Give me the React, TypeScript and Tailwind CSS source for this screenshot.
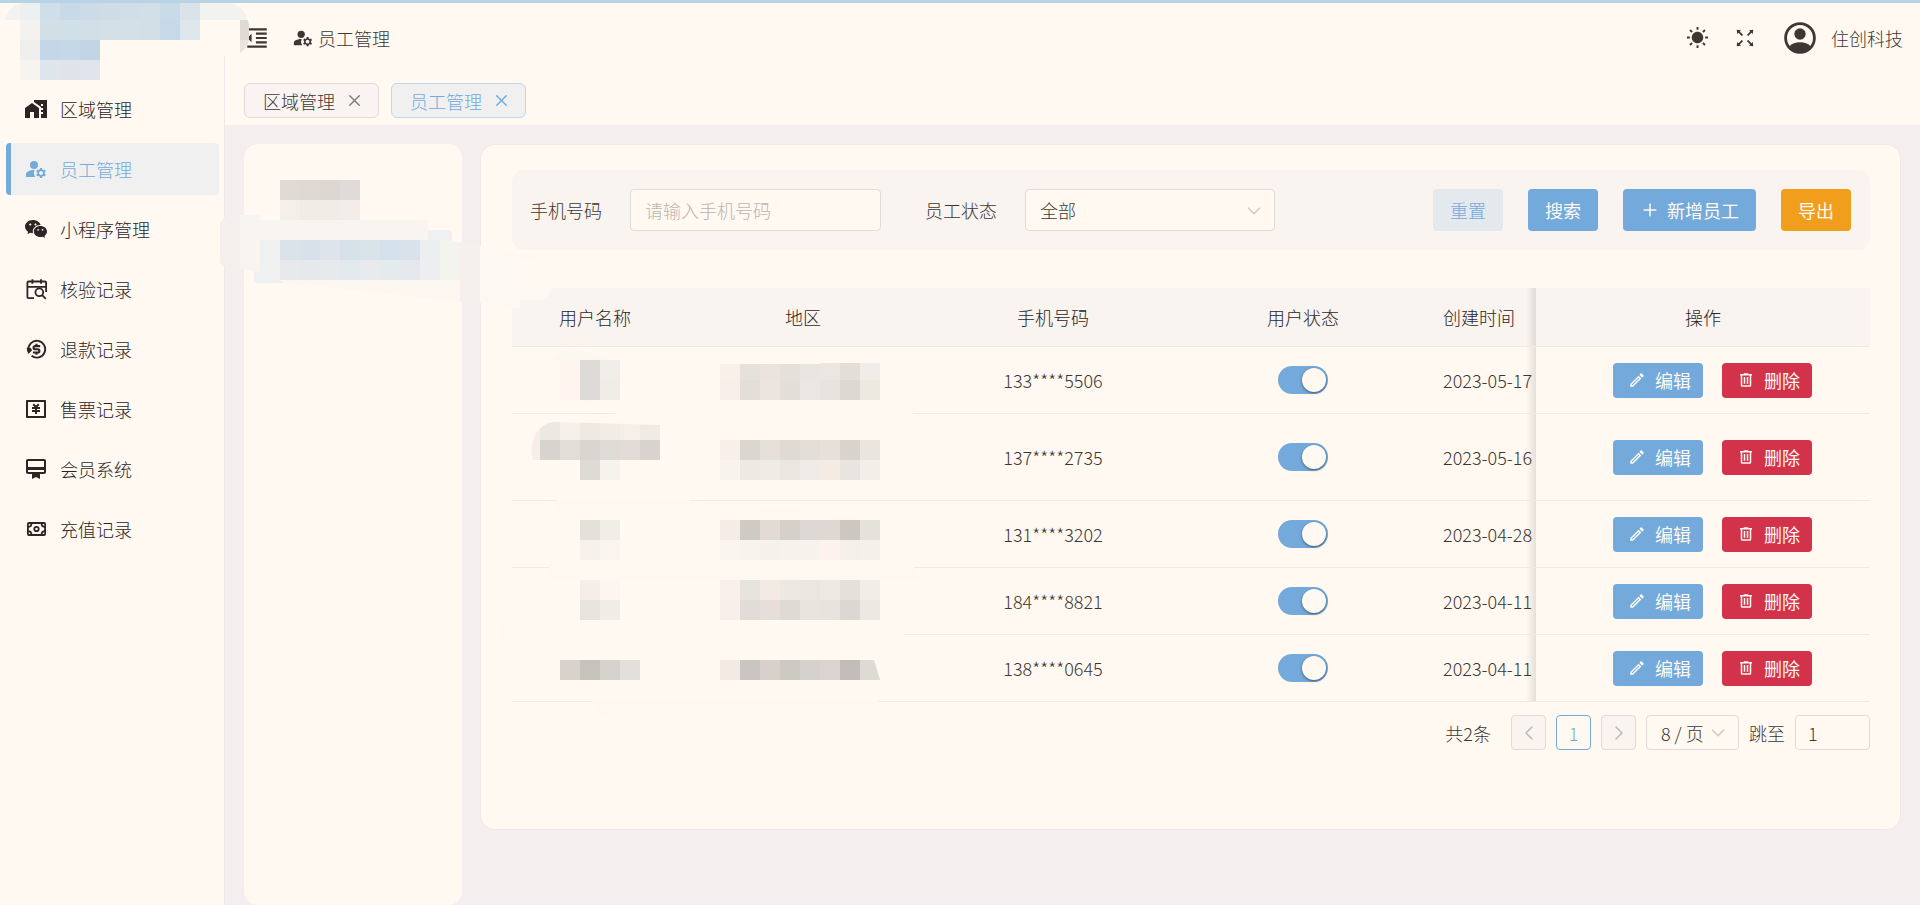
import React from 'react';
import { AiOutlineFullscreen } from 'react-icons/ai';
import { MdCardMembership, MdFormatIndentDecrease, MdHomeWork, MdManageAccounts, MdOutlineEdit } from 'react-icons/md';
import { RiMoneyCnyBoxLine, RiSunFill, RiWechatFill } from 'react-icons/ri';
import { ChevronDown, ChevronLeft, ChevronRight, Plus, X } from 'lucide-react';

const CalendarSearchIcon = () => (
    <svg viewBox="0 0 24 24" className="size-6" fill="none" stroke="currentColor" strokeWidth="1.8">
        <path d="M10 21.2H4.6a1.2 1.2 0 0 1-1.2-1.2V5.7a1.2 1.2 0 0 1 1.2-1.2h16.3a1.2 1.2 0 0 1 1.2 1.2V15" />
        <path d="M3.4 9.8h18.7M8.4 2.3v4.4M17 2.3v4.4" />
        <circle cx="15.3" cy="15.3" r="3.9" />
        <path d="M18.2 18.2l3.6 3.6" />
    </svg>
)

const RefundIcon = () => (
    <svg viewBox="0 0 24 24" className="size-6" fill="none" stroke="currentColor" strokeWidth="1.9">
        <path d="M4.400 13a8.400 8.400 0 1 1 3.200 5.800" />
        <path d="M2.700 10.800h3.800l1.600 2.500-3.600 3.600q-1.800-2-1.800-6.100z" fill="currentColor" stroke="none" />
        <path d="M16.200 9.100h-5a1.600 1.600 0 0 0 0 3.200h2.600a1.600 1.600 0 0 1 0 3.200H8.900M12.500 6.800v2.300M12.500 15.300v2.400" strokeWidth="2.1" />
    </svg>
)

const CashIcon = () => (
    <svg viewBox="0 0 24 24" className="size-6" fill="none" stroke="currentColor" strokeWidth="1.8">
        <rect x="3.900" y="6" width="17.200" height="12" rx="1" />
        <circle cx="12.500" cy="12" r="2.200" />
        <path d="M4 9.800c2 0 3.400-1.400 3.400-3.400M21 9.800c-2 0-3.400-1.400-3.400-3.400M4 14.200c2 0 3.400 1.400 3.400 3.400M21 14.200c-2 0-3.400 1.400-3.400 3.400" />
    </svg>
)

const TrashIcon = () => (
    <svg viewBox="0 0 24 24" className="size-[18px]" fill="currentColor">
        <path d="M9 3v1H4v2h1v13a2 2 0 0 0 2 2h10a2 2 0 0 0 2-2V6h1V4h-5V3H9M7 6h10v13H7V6m2 2v9h2V8H9m4 0v9h2V8h-2z" />
    </svg>
)

const AvatarIcon = () => (
    <svg viewBox="0 0 32 32" className="size-8">
        <circle cx="16" cy="16" r="14.4" fill="none" stroke="currentColor" strokeWidth="2.8" />
        <circle cx="16" cy="12" r="5.7" fill="currentColor" />
        <path d="M5.5 24.5c2-3 6-4.3 10.5-4.3s8.5 1.3 10.5 4.3c-2.5 3.6-6 5.9-10.5 5.9s-8-2.3-10.5-5.9z" fill="currentColor" />
    </svg>
)

const menu = [
    { label: '区域管理', icon: <MdHomeWork className="size-6" /> },
    { label: '员工管理', icon: <MdManageAccounts className="size-6" />, active: true },
    { label: '小程序管理', icon: <RiWechatFill className="size-6" /> },
    { label: '核验记录', icon: <CalendarSearchIcon /> },
    { label: '退款记录', icon: <RefundIcon /> },
    { label: '售票记录', icon: <RiMoneyCnyBoxLine className="size-6" /> },
    { label: '会员系统', icon: <MdCardMembership className="size-6" /> },
    { label: '充值记录', icon: <CashIcon /> },
]

// [x, y, colours of one line of 20px tiles]
type Tiles = [number, number, string]

const rows: { phone: string, date: string, height: number, name: Tiles[], area: Tiles[], nameClip?: string, areaClip?: string }[] = [
    {
        phone: '133****5506',
        date: '2023-05-17',
        height: 66,
        name: [[35, 13, 'fff5ef dedad7 f1ede9'], [35, 33, 'fff4ef dedad7 f0ece6']],
        area: [[0, 13, 'f9f0ea e6e1db ede3dd e5e1da e9e5e0 ebe7e0 e3dfd8 f0ece7'], [0, 33, 'f8efea e3ded8 ece4de e3dfd8 ebe6e2 e8e4dd ddd8d2 ede9e1']],
        areaClip: 'M0 17h100v-1h60v40H0z',
    },
    {
        phone: '137****2735',
        date: '2023-05-16',
        height: 86,
        name: [[-5, 6, 'f7eee8 ece8e2 f5f0ea eee9e3 f0ece6 f4efe8 efebe5'], [-5, 26, 'f7eee8 d7d3ce e1ddd7 dad6cf dfdbd7 e3dbd7 d8d3cf'], [55, 46, 'dedad4 f6f2ec']],
        nameClip: 'M8 46C3 28 12 8 32 8l103 3v35H95v20H55V46z',
        area: [[0, 26, 'f8efea dad7d1 e7dfda dfdbd4 e2ddd7 e5e0da d8d3cd eae6df'], [0, 46, 'f8f3ec eee9e3 efebe5 ebe6e0 f0ebe7 f4ebe4 e8e4e0 f3eee8']],
    },
    {
        phone: '131****3202',
        date: '2023-04-28',
        height: 66,
        name: [[55, 19, 'e4e0da f1ede7'], [55, 39, 'f6f2eb faf6ef']],
        area: [[0, 19, 'f5ece7 cecbc5 e3dad4 d5d0c9 ddd8d4 dcd8d2 cdc7c1 e5e1db'], [0, 39, 'faf6ef f8f3ec f6f1eb f6f2ec f6f2ec fdf3ed f4efe9 f5f0ea']],
    },
    {
        phone: '184****8821',
        date: '2023-04-11',
        height: 66,
        name: [[55, 12, 'f6ede8 fbf6f0'], [55, 32, 'e8e4de f0ece6']],
        area: [[0, 12, 'faf0eb e6e4dd f3eae4 ece8e2 eae6e0 eeeae3 e4e0da f1ede7'], [0, 32, 'f8efea e1dcd8 e7deda dedad4 e8e4de e8e3dd dbd7d3 ece8e2']],
    },
    {
        phone: '138****0645',
        date: '2023-04-11',
        height: 66,
        name: [[35, 25, 'd9d1cc c6c2bc d6d3cc e3e0dc']],
        area: [[0, 25, 'f3eae4 c9c6c1 d9d0cb cdc9c3 d5d1cd d9d4ce c2bdb9 dedad4']],
        areaClip: 'M0 25h154l6 20H0z',
    },
]

const TileRows = ({ tiles }: { tiles: Tiles[] }) => (
    <>
        {tiles.map(([x, y, colors]) =>
            colors.split(' ').map((color, i) => (
                <rect key={`${x}-${y}-${i}`} x={x + i * 20} y={y} width="20" height="20" fill={`#${color}`} />
            ))
        )}
    </>
)

const Mosaic = ({ id, tiles, width, height, clip }: { id: string, tiles: Tiles[], width: number, height: number, clip?: string }) => (
    <svg width={width} height={height} viewBox={`0 0 ${width} ${height}`} className="mx-auto block" shapeRendering="crispEdges">
        {clip && <clipPath id={id}><path d={clip} /></clipPath>}
        <g clipPath={clip ? `url(#${id})` : undefined}>
            <TileRows tiles={tiles} />
        </g>
    </svg>
)

const Sidebar = () => (
    <aside className="w-[225px] shrink-0 border-r border-[#efeaea] bg-[#fff9f2] pt-20 pr-[5px] pl-[6px]">
        <nav className="flex flex-col gap-2">
            {menu.map((item) => (
                <a
                    key={item.label}
                    href="#"
                    className={`flex h-[52px] items-center gap-3 rounded border-l-[5px] pl-[13px] ${item.active ? 'border-[#73aadb] bg-[#f0f0f0] text-[#73aadb]' : 'border-transparent text-[#2b2625]'}`}
                >
                    {item.icon}
                    {item.label}
                </a>
            ))}
        </nav>
    </aside>
)

const Header = () => (
    <header className="bg-[#fff9f2] pb-[7px] pl-[19px] text-[#3c3733]">
        <div className="flex h-[69px] items-center pr-[17px]">
            <button type="button" aria-label="menu"><MdFormatIndentDecrease className="size-[26px]" /></button>
            <MdManageAccounts className="ml-[22px] size-[22px]" />
            <span className="ml-1">员工管理</span>
            <div className="ml-auto flex items-center">
                <button type="button" aria-label="theme"><RiSunFill className="size-[23px]" /></button>
                <button type="button" aria-label="fullscreen" className="ml-6"><AiOutlineFullscreen className="size-6" /></button>
                <span className="mr-[15px] ml-[27px]"><AvatarIcon /></span>
                <span>住创科技</span>
            </div>
        </div>
        <div className="flex gap-3 pt-[11px]">
            <button type="button" className="flex h-[35px] items-center gap-[10px] rounded-md border border-[#dfdbd8] bg-[#f9f4f1] pr-[14px] pl-[18px]">
                区域管理
                <X className="size-[19px] text-[#807b77]" strokeWidth={1.8} />
            </button>
            <button type="button" className="flex h-[35px] items-center gap-[10px] rounded-md border border-[#c0d7eb] bg-[#f0f0f0] pr-[14px] pl-[18px] text-[#73aadb]">
                员工管理
                <X className="size-[19px]" strokeWidth={1.8} />
            </button>
        </div>
    </header>
)

const Filters = () => (
    <form className="flex h-20 items-center rounded-xl bg-[#f9f4f0] pr-[19px] pl-[18px]">
        <label htmlFor="phone">手机号码</label>
        <input id="phone" placeholder="请输入手机号码" className="ml-7 h-[42px] w-[251px] rounded border border-[#dfdbd8] bg-[#fff9f2] px-[14px] placeholder:text-[#bab5b1]" />
        <label htmlFor="status" className="ml-11">员工状态</label>
        <div className="relative ml-7">
            <select id="status" className="h-[42px] w-[250px] appearance-none rounded border border-[#dfdbd8] bg-[#fff9f2] px-[14px]">
                <option>全部</option>
            </select>
            <ChevronDown className="pointer-events-none absolute top-[11px] right-[10px] size-[22px] text-[#cfcac5]" strokeWidth={1.8} />
        </div>
        <div className="ml-auto flex gap-[25px] font-normal text-[#fff9f2]">
            <button type="button" className="h-[42px] rounded bg-[#e3e9ed] px-[17px] font-light text-[#73aadb]">重置</button>
            <button type="button" className="h-[42px] rounded bg-[#73aadb] px-[17px]">搜索</button>
            <button type="button" className="flex h-[42px] items-center gap-[7px] rounded bg-[#73aadb] px-[17px]">
                <Plus className="size-5" strokeWidth={1.8} />
                新增员工
            </button>
            <button type="button" className="h-[42px] rounded bg-[#f19e1c] px-[17px]">导出</button>
        </div>
    </form>
)

const thClass = 'h-[59px] border-b border-[#efeaea] bg-[#f9f4f0] font-light text-[#2b2625]'
const tdClass = 'border-b border-[#efeaea] p-0 text-center'
const stickyClass = "sticky right-0 before:absolute before:inset-y-0 before:right-full before:w-[10px] before:bg-linear-to-r before:from-transparent before:to-black/10 before:content-['']"

const StaffTable = () => (
    <div className="relative mt-[38px]">
        <div className="overflow-hidden">
            <table className="w-[1500px] min-w-full table-fixed border-separate border-spacing-0">
                <colgroup>
                    <col className="w-[166px]" />
                    <col className="w-[250px]" />
                    <col className="w-[250px]" />
                    <col className="w-[250px]" />
                    <col className="w-[250px]" />
                    <col className="w-[334px]" />
                </colgroup>
                <thead>
                    <tr>
                        <th className={thClass}>用户名称</th>
                        <th className={thClass}>地区</th>
                        <th className={thClass}>手机号码</th>
                        <th className={thClass}>用户状态</th>
                        <th className={`${thClass} pl-[15px] text-left`}>创建时间</th>
                        <th className={`${thClass} ${stickyClass}`}>操作</th>
                    </tr>
                </thead>
                <tbody>
                    {rows.map((row, i) => (
                        <tr key={row.phone}>
                            <td className={tdClass}><Mosaic id={`name-${i}`} tiles={row.name} width={140} height={row.height} clip={row.nameClip} /></td>
                            <td className={tdClass}><Mosaic id={`area-${i}`} tiles={row.area} width={166} height={row.height} clip={row.areaClip} /></td>
                            <td className={tdClass}>{row.phone}</td>
                            <td className={tdClass}>
                                <input
                                    type="checkbox"
                                    role="switch"
                                    aria-label={row.phone}
                                    defaultChecked
                                    className="mx-auto block h-7 w-[50px] appearance-none rounded-full bg-[#dfdbd8] p-[2px] before:block before:size-6 before:rounded-full before:bg-[#fff9f2] before:shadow before:shadow-black/40 before:content-[''] checked:bg-[#73aadb] checked:before:ml-auto"
                                />
                            </td>
                            <td className="border-b border-[#efeaea] p-0 pl-[15px] text-left">{row.date}</td>
                            <td className={`${tdClass} ${stickyClass} bg-[#fff9f2]`}>
                                <div className="flex justify-center font-normal text-[#fff9f2]">
                                    <button type="button" className="ml-[19px] flex h-[35px] items-center gap-[9px] rounded bg-[#73aadb] pr-3 pl-[15px]">
                                        <MdOutlineEdit className="size-[18px]" />
                                        编辑
                                    </button>
                                    <button type="button" className="ml-[19px] flex h-[35px] items-center gap-[9px] rounded bg-[#d2334a] pr-3 pl-[15px]">
                                        <TrashIcon />
                                        删除
                                    </button>
                                </div>
                            </td>
                        </tr>
                    ))}
                </tbody>
            </table>
        </div>
        {/* smears over the row lines */}
        <svg className="pointer-events-none absolute -top-12 -left-8" width="460" height="500" viewBox="480 240 460 500" fill="#fef8f1">
            <path d="M480 246l40 8v-1l15 4q6 2 7 3h-22v20h32q0 20-12 20h-20v8l-40-5z" fill="#fdf8f2" />
            <path d="M550 360q12-13 20-12t45 12z" fill="#fcf7f0" />
            <path d="M580 400h344l-14 17H660q-50 1-80-17z" />
            <path d="M557 500h131l4 1q80 4 180 19H552zM550 560h360l10 20H550zM500 625h406l-4 15H500zM591 700h288q-8 20-30 20H615q-20-5-24-20z" />
        </svg>
    </div>
)

const Pagination = () => (
    <div className="mt-[13px] flex items-center justify-end gap-[10px]">
        <span className="mr-[10px]">共2条</span>
        <button type="button" aria-label="previous" className="flex size-[35px] items-center justify-center rounded border border-[#dfdbd8] bg-[#f9f4f0] text-[#bdb8b4]"><ChevronLeft className="size-6" strokeWidth={1.5} /></button>
        <button type="button" className="size-[35px] rounded border border-[#73aadb] text-[#73aadb]">1</button>
        <button type="button" aria-label="next" className="flex size-[35px] items-center justify-center rounded border border-[#dfdbd8] bg-[#f9f4f0] text-[#bdb8b4]"><ChevronRight className="size-6" strokeWidth={1.5} /></button>
        <div className="relative">
            <select aria-label="page size" className="block h-[35px] w-[93px] appearance-none rounded border border-[#dfdbd8] bg-[#fff9f2] pl-[14px]">
                <option>8 / 页</option>
            </select>
            <ChevronDown className="pointer-events-none absolute top-[7px] right-[10px] size-[22px] text-[#cfcac5]" strokeWidth={1.8} />
        </div>
        <label htmlFor="jump">跳至</label>
        <input id="jump" defaultValue="1" className="h-[35px] w-[75px] rounded border border-[#dfdbd8] bg-[#fff9f2] px-3" />
    </div>
)

const LogoSmear = () => (
    <svg className="pointer-events-none absolute top-0 left-0" width="260" height="92" viewBox="0 0 260 92">
        <clipPath id="logo-clip"><path d="M5 20Q10 3 25 3h200q20 0 24 22v15q-4 15-20 16H100v25H24q-4 0-4-4V20z" /></clipPath>
        <g clipPath="url(#logo-clip)" shapeRendering="crispEdges">
            <path d="M200 3h60v53h-60z" fill="#fff9f2" />
            <path d="M240 20h20v20h-20z" fill="#dfdad4" />
            <path d="M240 40h20v16h-20z" fill="#e9e4df" />
            <TileRows
                tiles={[
                    [0, 0, 'f2f2f0 edf0f1 cfdee8 c8d9e7 cbdbe7 cddce6 d1dee7 d2dfe7 c9dae8 dae2ea f2f2f0 f2f2f0 f2f2f0'],
                    [20, 20, 'f3f2ef d2dfe7 d1dfe8 d2dfe7 d3e0e7 d4e0e7 d3dfe7 c6d9e9 dfe7ee'],
                    [20, 40, 'f0efee c4d7e8 c5d8e8 c2d5e6'],
                    [20, 60, 'f7f3ee dfe5ec e0e4ea dfe4ed'],
                ]}
            />
        </g>
        <path d="M0 0h260v3H0z" fill="#b8d2e6" />
    </svg>
)

const TreePanel = () => (
    <section className="relative w-[218px] shrink-0 rounded-[14px] bg-[#fff9f2]">
        <svg className="pointer-events-none absolute top-0 -left-7 z-10" width="270" height="180" viewBox="216 144 270 180">
            <path d="M254 240h190v43H258q-4 0-4-4z" fill="#eff0f0" />
            <path d="M427 230h21q4 0 4 4v12h-25z" fill="#eff0f0" />
            <path d="M220 222q6-7 20-7v54l-14-1q-4-2-6-6z" fill="#f4efed" />
            <path d="M240 215h20v5h168l-3 18 5 2H260v32l-20-3z" fill="#f8f5f1" />
            <path d="M440 240q10 0 20 3v37h-20z" fill="#f4f4ef" />
            <path d="M280 280h180v22q-80-9-150-17-25 2-30-5z" fill="#fdf7f2" />
            <path d="M460 242l20 4v57l-20-1z" fill="#f5efed" />
            <g shapeRendering="crispEdges">
                <TileRows
                    tiles={[
                        [280, 180, 'dfdbd4 dedad3 dcd8d1 dfdbd8'],
                        [280, 200, 'f4efe8 f1ede6 f0ece6 f2ede8'],
                        [280, 240, 'dae2ea d8e0ea dde4ec d7e1ea d8e3ea d5e1ea d9e2eb ecefef'],
                        [280, 260, 'e7e9ec e5e9ec e6eaed e2e9ec e9eaed e4ebec e4e8ed eceeef'],
                    ]}
                />
                <path d="M280 220h148v20H280z" fill="#f8f5f1" />
            </g>
        </svg>
    </section>
)

export default function App() {
    return (
        <div className="relative flex min-h-screen border-t-[3px] border-[#b8d2e6] bg-[#f4eeee] font-['Noto_Sans_CJK_SC',sans-serif] text-lg font-light text-[#3c3733]">
            <Sidebar />
            <div className="flex min-w-0 flex-1 flex-col">
                <Header />
                <main className="flex flex-1 gap-[19px] pt-[19px] pr-5 pl-[19px]">
                    <TreePanel />
                    <section className="mt-px min-w-0 flex-1 self-start rounded-[14px] bg-[#fff9f2] pt-[25px] pr-[30px] pb-[79px] pl-[31px] shadow-[0_0_0_1px_#efe9e8]">
                        <Filters />
                        <StaffTable />
                        <Pagination />
                    </section>
                </main>
            </div>
            <div className="absolute -top-[3px] left-0">
                <LogoSmear />
            </div>
        </div>
    )
}
